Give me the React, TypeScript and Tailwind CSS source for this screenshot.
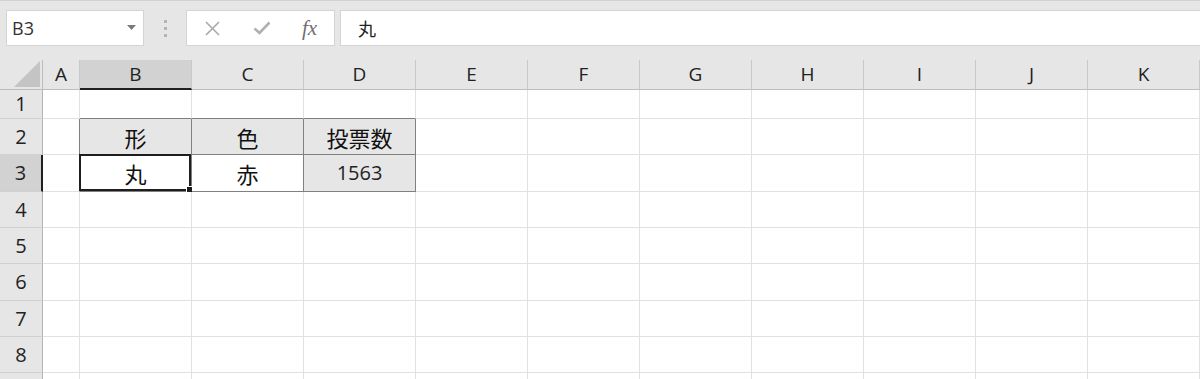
import React from "react";

const cols = ["A", "B", "C", "D", "E", "F", "G", "H", "I", "J", "K"];
const rows = [1, 2, 3, 4, 5, 6, 7, 8, 9];

const values: Record<string, string> = {
  B2: "形",
  C2: "色",
  D2: "投票数",
  B3: "丸",
  C3: "赤",
  D3: "1563",
};

const table = ["B2", "C2", "D2", "B3", "C3", "D3"];
const grey = ["B2", "C2", "D2", "D3"];
const aboveTable = ["B1", "C1", "D1"];
const leftOfTable = ["A2", "A3"];

const jp = { fontFamily: '"Noto Sans CJK JP", "Noto Sans", sans-serif' };
const ui = { fontFamily: '"Open Sans", "Noto Sans", sans-serif' };

function Cell({ id }: { id: string }) {
  const inTable = table.includes(id);
  let cls = "relative flex items-center justify-center border-r border-b ";
  if (inTable) cls += "border-[#808080] ";
  else if (aboveTable.includes(id)) cls += "border-r-[#e1e1e1] border-b-[#808080] ";
  else if (leftOfTable.includes(id)) cls += "border-r-[#808080] border-b-[#e1e1e1] ";
  else cls += "border-[#e1e1e1] ";
  cls += grey.includes(id) ? "bg-[#e7e6e6]" : "bg-white";
  const v = values[id];
  const isNum = v && /^\d+$/.test(v);
  return (
    <div className={cls}>
      {v && (
        <span
          className={isNum ? "text-[20px] text-[#222] leading-none" : "text-[22px] text-[#111] leading-none"}
          style={isNum ? ui : jp}
        >
          {v}
        </span>
      )}
      {id === "B3" && (
        <div className="absolute -left-[1px] -top-[1px] right-0 bottom-0 border-2 border-[#1e1e1e]">
          <div className="absolute -right-[4px] -bottom-[4px] w-[7px] h-[7px] bg-[#1e1e1e] border border-white" />
        </div>
      )}
    </div>
  );
}

export default function App() {
  return (
    <div className="w-[1200px] h-[379px] overflow-hidden bg-white select-none">
      {/* formula bar */}
      <div className="h-[60px] bg-[#e6e6e6] border-t border-[#d2d2d2] flex items-start pt-[9px]">
        <div className="ml-[6px] w-[138px] h-[36px] bg-white border border-[#d4d4d4] flex items-center justify-between pl-[5px] pr-[7px]">
          <span className="text-[18px] text-[#333]" style={ui}>B3</span>
          <svg width="9" height="6" viewBox="0 0 9 6"><path d="M0 0h9L4.5 5z" fill="#7a7a7a" /></svg>
        </div>
        <div className="w-[42px] h-[36px] flex flex-col items-center justify-center gap-[4px]">
          <span className="w-[3px] h-[3px] bg-[#b5b5b5]" />
          <span className="w-[3px] h-[3px] bg-[#b5b5b5]" />
          <span className="w-[3px] h-[3px] bg-[#b5b5b5]" />
        </div>
        <div className="w-[149px] h-[36px] bg-white border border-[#d4d4d4] flex items-center">
          <svg className="ml-[18px]" width="15" height="15" viewBox="0 0 15 15">
            <path d="M1 1L14 14M14 1L1 14" stroke="#a9a9a9" strokeWidth="1.6" />
          </svg>
          <svg className="ml-[33px]" width="18" height="14" viewBox="0 0 18 14">
            <path d="M1.5 7.5L6.5 12L16.5 1.5" stroke="#b0b0b0" strokeWidth="2.6" fill="none" />
          </svg>
          <span
            className="ml-[31px] text-[21px] italic text-[#707070] leading-none"
            style={{ fontFamily: '"Liberation Serif", "DejaVu Serif", serif' }}
          >
            fx
          </span>
        </div>
        <div className="ml-[5px] flex-1 h-[36px] bg-white border border-[#d4d4d4] border-r-0 flex items-center pl-[17px]">
          <span className="text-[18px] text-[#222]" style={jp}>丸</span>
        </div>
      </div>

      {/* sheet grid */}
      <div className="grid grid-cols-[43px_37px_repeat(10,112px)] grid-rows-[30px_29px_36px_37px_36px_36px_37px_36px_36px_20px] bg-[#e6e6e6]">
        {/* corner */}
        <div className="border-r border-b border-[#bdbdbd] bg-[#e6e6e6] flex items-end justify-end pr-[2px] pb-[2px]">
          <svg width="26" height="26" viewBox="0 0 26 26"><path d="M26 0V26H0z" fill="#c4c4c4" /></svg>
        </div>
        {cols.map((c) => (
          <div
            key={c}
            className={
              "flex items-center justify-center text-[19px] text-[#222] border-r border-[#c8c8c8] " +
              (c === "B" ? "bg-[#d2d2d2] border-b-2 border-b-[#1f1f1f]" : "bg-[#e6e6e6] border-b border-b-[#bdbdbd]")
            }
            style={ui}
          >
            {c}
          </div>
        ))}
        {rows.map((r) => (
          <React.Fragment key={r}>
            <div
              className={
                "flex items-center justify-center text-[20px] text-[#222] border-b border-[#d0d0d0] " +
                (r === 3 ? "bg-[#d2d2d2] border-r-2 border-r-[#1f1f1f]" : "bg-[#e6e6e6] border-r border-r-[#b4b4b4]")
              }
              style={ui}
            >
              {r < 9 ? r : ""}
            </div>
            {cols.map((c) => (
              <Cell key={c + r} id={c + r} />
            ))}
          </React.Fragment>
        ))}
      </div>
    </div>
  );
}
